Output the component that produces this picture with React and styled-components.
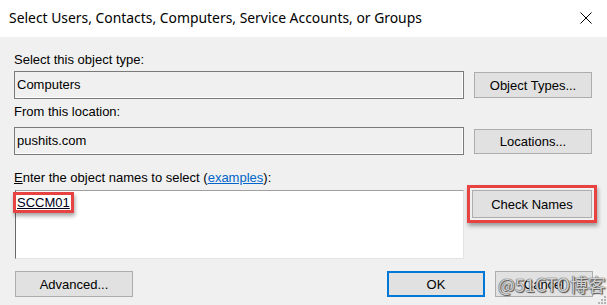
import React from 'react';
import styled, { createGlobalStyle } from 'styled-components';

const GlobalStyle = createGlobalStyle`
  html, body {
    margin: 0;
    padding: 0;
    background: #f0f0f0;
  }
  body {
    width: 607px;
    height: 305px;
    overflow: hidden;
    font-family: "Liberation Sans", Arial, sans-serif;
    font-size: 13px;
    color: #000;
  }
`;

const Dialog = styled.div`
  width: 607px;
  height: 305px;
  display: flex;
  flex-direction: column;
  background: #f0f0f0;
  position: relative;
  overflow: hidden;
`;

const TitleBar = styled.div`
  height: 37px;
  flex: none;
  background: #fff;
  display: flex;
  align-items: center;
  justify-content: space-between;
  padding: 0 15px 2px 9px;
  box-sizing: border-box;
`;

const Title = styled.div`
  font-family: "Noto Sans", "Liberation Sans", sans-serif;
  font-size: 13.9px;
  color: #000;
`;

const Body = styled.div`
  flex: 1;
  padding: 15px 14px 0 14px;
  display: flex;
  flex-direction: column;
`;

const Label = styled.div`
  height: 16px;
  line-height: 16px;
  margin-top: ${p => p.top || 0}px;
  margin-bottom: ${p => p.bottom || 0}px;
  white-space: nowrap;

  u {
    text-decoration-thickness: 1px;
  }
`;

const Link = styled.span`
  color: #0066cc;
  text-decoration: underline;
`;

const Row = styled.div`
  display: grid;
  grid-template-columns: 450px 1fr;
  column-gap: ${p => p.gap || 10}px;
  align-items: ${p => p.align || 'center'};
`;

const TextBox = styled.div`
  height: 28px;
  box-sizing: border-box;
  border: 1px solid #7a7a7a;
  box-shadow: inset -1px -1px 0 #fff;
  background: #f0f0f0;
  padding: 0 2px 2px;
  display: flex;
  align-items: center;
`;

const NamesBox = styled.div`
  height: 69px;
  box-sizing: border-box;
  margin-left: 1px;
  border-top: 1px solid #a0a0a0;
  border-left: 1px solid #696969;
  border-right: 1px solid #e3e3e3;
  border-bottom: 1px solid #e3e3e3;
  background: #fff;
  padding: 3px 0 0 1px;
`;

const Button = styled.div`
  width: ${p => p.w || 118}px;
  height: ${p => p.h || 26}px;
  flex: none;
  box-sizing: border-box;
  border: ${p => (p.primary ? '2px solid #0078d7' : '1px solid #adadad')};
  background: #e1e1e1;
  display: flex;
  align-items: center;
  justify-content: center;
  font-size: 13px;
  color: #000;
  position: relative;
  margin-left: ${p => p.ml || 0}px;
`;

const Highlight = styled.div`
  display: inline-flex;
  align-self: flex-start;
  border: 3px solid #e84343;
  padding: ${p => p.pad || 0}px;
  box-shadow: 1px 3px 4px rgba(0, 0, 0, 0.35);
  margin: ${p => p.m || '0'};
`;

const Resolved = styled.span`
  color: #000018;
  text-decoration: underline;
  line-height: 15px;
  padding: 0 1px;
`;

const Footer = styled.div`
  margin-top: 12px;
  display: flex;
  align-items: center;
  padding-left: 1px;
`;

const Spacer = styled.div`
  flex: 1;
`;

const Watermark = styled.div`
  position: absolute;
  left: 2px;
  top: -1px;
  font-family: "Noto Sans CJK SC", "Liberation Sans", sans-serif;
  font-size: 18px;
  white-space: nowrap;
  color: rgba(255, 255, 255, 0.75);
  text-shadow: 0 0 1px #444, 0 0 1px #444, 1px 1px 1px #555;
`;

const Grip = styled.svg`
  position: absolute;
  right: 1px;
  bottom: 1px;
`;

function CloseIcon() {
  return (
    <svg width="12" height="12" viewBox="0 0 12 12">
      <path d="M0.5 0.5 L11.5 11.5 M11.5 0.5 L0.5 11.5" stroke="#000" strokeWidth="1" />
    </svg>
  );
}

export default function App() {
  return (
    <Dialog>
      <GlobalStyle />
      <TitleBar>
        <Title>Select Users, Contacts, Computers, Service Accounts, or Groups</Title>
        <CloseIcon />
      </TitleBar>
      <Body>
        <Label bottom={3}>Select this object type:</Label>
        <Row>
          <TextBox>Computers</TextBox>
          <Button>Object Types...</Button>
        </Row>
        <Label top={5} bottom={7}>From this location:</Label>
        <Row>
          <TextBox>pushits.com</TextBox>
          <Button h={25}>Locations...</Button>
        </Row>
        <Label top={15} bottom={4}>
          <u>E</u>nter the object names to select (<Link>examples</Link>):
        </Label>
        <Row align="start" gap={8}>
          <NamesBox>
            <Highlight m="-2px 0 0 -4px">
              <Resolved>SCCM01</Resolved>
            </Highlight>
          </NamesBox>
          <Highlight pad={2} m="-5px 0 0 -5px">
            <Button w={120} h={28}>Check Names</Button>
          </Highlight>
        </Row>
        <Footer>
          <Button>Advanced...</Button>
          <Spacer />
          <Button w={98} primary>OK</Button>
          <Button w={98} ml={10}>
            Cancel
            <Watermark>@51CTO博客</Watermark>
          </Button>
        </Footer>
      </Body>
      <Grip width="8" height="8" viewBox="0 0 8 8">
        <g fill="#b4b4b4">
          <rect x="6" y="0" width="2" height="2" />
          <rect x="3" y="3" width="2" height="2" />
          <rect x="6" y="3" width="2" height="2" />
          <rect x="0" y="6" width="2" height="2" />
          <rect x="3" y="6" width="2" height="2" />
          <rect x="6" y="6" width="2" height="2" />
        </g>
      </Grip>
    </Dialog>
  );
}
